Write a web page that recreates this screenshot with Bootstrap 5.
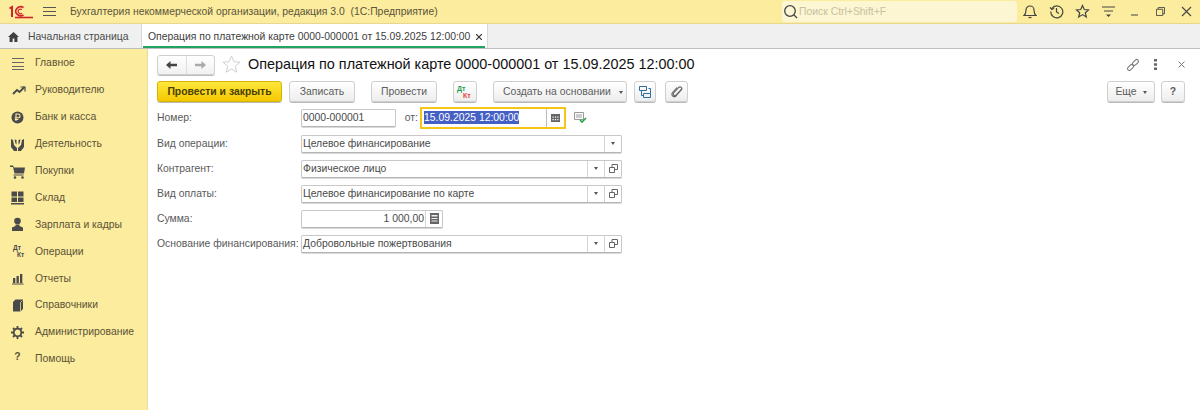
<!DOCTYPE html>
<html lang="ru"><head><meta charset="utf-8"><title>1С</title>
<link href="https://cdn.jsdelivr.net/npm/bootstrap@5.3.0/dist/css/bootstrap.min.css" rel="stylesheet">
<script src="https://cdn.jsdelivr.net/npm/bootstrap@5.3.0/dist/js/bootstrap.bundle.min.js"></script>
<style>
html,body{height:410px;overflow:hidden}
body{font-family:"Liberation Sans",Arial,sans-serif;font-size:10.4px;line-height:14px;color:#4b4b4b;background:#fff}
.topbar{height:24px;background:#fbec9e;border-bottom:1px solid #e6d98f;color:#5c5439}
.logo{width:24px;margin-left:9px;flex:none}
.burger{margin:0 14px 0 10px;flex:none}
.apptitle{white-space:pre}
.searchbox{width:235px;height:21px;margin-left:auto;background:#fdf6d3;border-radius:3px;color:#c7c0a0;padding-left:1px;gap:1px}
.topicons{width:183px;flex:none}
.topcell{flex:1;display:flex;justify-content:center;align-items:center}
.tabbar{height:25px;background:#f0f0f0;border-bottom:1px solid #bdbdbd}
.hometab{width:142px;height:24px;border-right:1px solid #d9d9d9;padding:1px 0 0 8px;gap:9px;color:#4b4b4b}
.doctab{width:346px;height:24px;background:#fff;border-right:1px solid #d9d9d9;padding:1px 0 0 6px;color:#3d3d3d;position:relative;white-space:nowrap}
.doctab::after{content:"";position:absolute;left:1px;right:2px;bottom:0;height:2px;background:#1fa463}
.tabx{margin-left:6px}
.mainarea{height:361px}
.sidemenu{width:148px;background:#fbec9e;border-right:1px solid #e8dc9a;padding-top:1px}
.sideitem{height:26.9px;padding-left:8px;color:#5b5236}
.sideico{width:19px;height:19px;margin-right:8px;flex:none}
.formpane{padding:6px 15px 0 9px;min-width:0}
.headrow{height:19px;margin-bottom:7px}
.navgroup{width:58px;height:20px;border:1px solid #d0d0d0;border-radius:3px;background:linear-gradient(#fff,#f1f1f1);box-shadow:0 1px 0 #bbb}
.navgroup span{flex:1;height:100%}
.navgroup span+span{border-left:1px solid #ddd}
.star{margin:0 7px}
.doctitle{font-size:14.4px;color:#111;line-height:19px}
.headicons{margin-left:auto}
.m1{margin-right:14px}.m2{margin-right:21px}
.toolrow{height:21px;margin-bottom:3px}
.tbtn{height:21px;padding:0;font-size:10.4px;line-height:19px;color:#5c5c5c;border:1px solid #cfcfcf;border-radius:3px;background:linear-gradient(#fff,#ededed);box-shadow:0 1px 0 #b9b9b9;display:flex;align-items:center;justify-content:center;flex:none}
.tbtn:hover{color:#5c5c5c}
.tmain{width:125px;margin-right:7px;font-weight:700;color:#4a3f00;border-color:#d4b400;background:linear-gradient(#ffe83c,#f4c800)}
.tmain:hover{color:#4a3f00}
.w66{width:66px}.m16{margin-right:16px}.w24{width:24px}.w22{width:22px;margin-right:9px}.w23{width:23px}
.w134{width:134px;margin-right:7px;justify-content:flex-start;padding-left:9px}
.w134 .caret{margin-left:8px}
.w48{width:48px;margin-right:6px}
.caret{display:inline-block;border:2px solid transparent;border-top:3px solid #555;border-bottom:0;margin-left:6px;margin-top:1px}
.formrow{height:25px;color:#5a5a5a}
.firstrow{margin-bottom:1px}
.flabel{width:144px;flex:none;white-space:nowrap}
.fbox{height:18px;border:1px solid #c8c8c8;border-bottom-color:#b5b5b5;border-radius:2px;background:#fff;color:#4a4a4a;padding-left:1px;display:flex;align-items:center;box-shadow:0 1px 0 #d9d9d9}
.w95{width:95px}.w321{width:321px}.w142{width:142px}
.grow1{flex:1;min-width:0}
.fcell{height:100%;display:flex;align-items:center;justify-content:center;border-left:1px solid #d5d5d5;flex:none}
.c17{width:17px}
.fromlbl{width:24px;text-align:right;padding-right:2px;flex:none}
.datebox{width:146px;height:22px;border:2px solid #f5c518;background:#fff;padding-left:2px;display:flex;align-items:center;flex:none}
.datesel{background:#4560c4;color:#fff;line-height:13px}
.datecell{width:18px;height:100%;display:flex;align-items:center;justify-content:center;border-left:1px solid #bbb;margin-left:auto}
.afterdate{margin-left:8px}
.moneyval{flex:1;text-align:right;padding-right:1px}
.dkt{font-size:7px;font-weight:700;line-height:7px;text-align:left;width:16px}
.dkt1{display:block;color:#1f9d55}
.dkt2{display:block;color:#e8443a;padding-left:6px}
</style></head>
<body class="d-flex flex-column">
<header class="topbar d-flex align-items-center">
 <svg class="logo" viewBox="0 0 24 14" height="14"><g fill="none" stroke="#d1232a"><path d="M.5 3.500L3 2v10" stroke-width="2"/><path d="M14.500 2.500a5 4.500 0 1 0 0 7.500" stroke-width="1.700"/><path d="M13 4.500a2.500 2.300 0 1 0 0 3.800" stroke-width="1.200"/><path d="M6 12.500h18" stroke-width="1.600"/></g></svg>
 <svg class="burger" width="13" height="12" viewBox="0 0 13 12" stroke="#555" stroke-width="1"><path d="M0 1.500h13M0 5.500h13M0 9.500h13"/></svg>
 <span class="apptitle">Бухгалтерия некоммерческой организации, редакция 3.0  (1С:Предприятие)</span>
 <div class="searchbox d-flex align-items-center">
  <svg width="15" height="15" viewBox="0 0 15 15" fill="none" stroke="#444" stroke-width="1.300"><circle cx="7" cy="7" r="5.300"/><path d="M11 11l3 3"/></svg><span>Поиск Ctrl+Shift+F</span>
 </div>
 <div class="topicons d-flex align-items-center">
  <span class="topcell"><svg width="14" height="15" viewBox="0 0 14 15" fill="none" stroke="#444" stroke-width="1.200"><path d="M1 11.500c2-1.500 2-3 2-5.500a4 4 0 0 1 8 0c0 2.500 0 4 2 5.500z"/><path d="M5.500 13.500h3"/></svg></span>
  <span class="topcell"><svg width="15" height="15" viewBox="0 0 15 15" fill="none" stroke="#444" stroke-width="1.200"><path d="M2.800 4.500a6 6 0 1 1-1 3"/><path d="M1 3.500l2 2 2-1.500"/><path d="M7.500 4v4l2.500 1.500"/></svg></span>
  <span class="topcell"><svg width="15" height="15" viewBox="0 0 15 15" fill="none" stroke="#444" stroke-width="1.200"><path d="M7.500 1.500l1.800 4 4.200.4-3.200 2.800 1 4.200-3.800-2.300-3.800 2.300 1-4.200L1.500 5.900l4.200-.4z"/></svg></span>
  <span class="topcell"><svg width="13" height="13" viewBox="0 0 13 13" fill="#444"><path d="M0 1.500h13v1H0zM2 5.500h9v1H2z"/><path d="M4 9.500h5L6.500 12z"/></svg></span>
  <span class="topcell"><svg width="9" height="9" viewBox="0 0 9 9" fill="#444"><path d="M1 7.500h7v1H1z"/></svg></span>
  <span class="topcell"><svg width="9" height="9" viewBox="0 0 10 10" fill="none" stroke="#444"><path d="M.5 2.500h7v7h-7z"/><path d="M2.500 2.500v-2h7v7h-2"/></svg></span>
  <span class="topcell"><svg width="11" height="11" viewBox="0 0 11 11" stroke="#444" stroke-width="1.100"><path d="M1 1l9 9M10 1l-9 9"/></svg></span>
 </div>
</header>
<nav class="tabbar d-flex">
 <div class="hometab d-flex align-items-center"><svg width="11" height="10" viewBox="0 0 11 10" fill="#3f3f3f"><path d="M5.500 0L0 5h1.600v5h3V6.500h1.800V10h3V5H11z"/></svg><span>Начальная страница</span></div>
 <div class="doctab d-flex align-items-center"><span>Операция по платежной карте 0000-000001 от 15.09.2025 12:00:00</span><svg class="tabx" width="6" height="6" viewBox="0 0 6 6" stroke="#333" stroke-width="1.200"><path d="M0 0l6 6M6 0L0 6"/></svg></div>
</nav>
<div class="mainarea d-flex">
 <aside class="sidemenu">
  <div class="sideitem d-flex align-items-center"><svg class="sideico" viewBox="0 0 19 19" stroke="#666" stroke-width="1" fill="none"><path d="M4 4.500h12M4 8.500h12M4 12.500h12M4 15.500h12"/></svg>Главное</div>
  <div class="sideitem d-flex align-items-center"><svg class="sideico" viewBox="0 0 19 19" fill="none" stroke="#4a4a4a" stroke-width="1.800"><path d="M5 13l4-4 2.500 2 5-5"/><path d="M12.500 6h4.500v4.500" stroke-width="1.200"/></svg>Руководителю</div>
  <div class="sideitem d-flex align-items-center"><svg class="sideico" viewBox="0 0 19 19"><circle cx="9.500" cy="9.500" r="6" fill="#4a4a4a"/><path d="M8 13V6h2.200a1.800 1.800 0 0 1 0 3.800H6.800M6.800 11.500h3.500" fill="none" stroke="#fbec9e" stroke-width="1.100"/></svg>Банк и касса</div>
  <div class="sideitem d-flex align-items-center"><svg class="sideico" viewBox="0 0 19 19" fill="#4a4a4a"><path d="M3 4l2 1 1 5 3 3v3H6l-3-4zM16 4l-2 1-1 5-3 3v3h3l3-4z"/><path d="M6.500 4.500l1 4 1 1V5zM12.500 4.500l-1 4-1 1V5z"/></svg>Деятельность</div>
  <div class="sideitem d-flex align-items-center"><svg class="sideico" viewBox="0 0 19 19" fill="#4a4a4a"><path d="M2 3.500h3l1 2h11l-1 6H6.500L5 5H2z"/><path d="M5.500 12.500h10v1h-10z"/><circle cx="7" cy="15.500" r="1.300"/><circle cx="14.500" cy="15.500" r="1.300"/></svg>Покупки</div>
  <div class="sideitem d-flex align-items-center"><svg class="sideico" viewBox="0 0 19 19" fill="#4a4a4a"><path d="M3.500 3.500h5.500v5H3.500zM10 3.500h5.500v5H10zM3.500 9.500h5.500v4.500H3.500zM10 9.500h5.500v4.500H10zM3 15h13v1.500H3z"/></svg>Склад</div>
  <div class="sideitem d-flex align-items-center"><svg class="sideico" viewBox="0 0 19 19" fill="#4a4a4a"><circle cx="9.500" cy="6" r="3.300"/><path d="M7.500 9.500h4V11l3.500 1.500V16H4v-3.500L7.500 11z"/></svg>Зарплата и кадры</div>
  <div class="sideitem d-flex align-items-center"><svg class="sideico" viewBox="0 0 19 19" fill="#4a4a4a" font-size="6.500" font-family="Liberation Sans" font-weight="700"><text x="5" y="7.500">Дт</text><text x="9" y="14.500">Кт</text></svg>Операции</div>
  <div class="sideitem d-flex align-items-center"><svg class="sideico" viewBox="0 0 19 19" fill="#4a4a4a"><path d="M5 9h2.300v5H5zM8.500 7h2.300v7H8.500zM12 5h2.300v9H12zM4 14.500h11.500v1H4z"/></svg>Отчеты</div>
  <div class="sideitem d-flex align-items-center"><svg class="sideico" viewBox="0 0 19 19" fill="#4a4a4a"><path d="M5 6l2.500-2.500h7.500V13l-2.500 2.500H5z"/><path d="M12.500 6.500l2-2" stroke="#fbec9e" stroke-width=".7"/><path d="M12.500 6.500V15.500" stroke="#fbec9e" stroke-width=".7"/></svg>Справочники</div>
  <div class="sideitem d-flex align-items-center"><svg class="sideico" viewBox="0 0 19 19"><circle cx="9.500" cy="9.500" r="3.800" fill="none" stroke="#4a4a4a" stroke-width="1.800"/><path d="M9.500 3v3M9.500 13v3M3 9.500h3M13 9.500h3M5 5l2 2M12 12l2 2M14 5l-2 2M7 12l-2 2" stroke="#4a4a4a" stroke-width="1.800"/></svg>Администрирование</div>
  <div class="sideitem d-flex align-items-center"><span class="sideico text-center fw-bold">?</span>Помощь</div>
 </aside>
 <main class="formpane flex-grow-1">
  <div class="headrow d-flex align-items-center">
   <div class="navgroup d-flex">
    <span class="d-flex align-items-center justify-content-center"><svg width="11" height="8" viewBox="0 0 11 8" fill="#444"><path d="M0 4l4.500-4v2.800H11v2.400H4.500V8z"/></svg></span>
    <span class="d-flex align-items-center justify-content-center"><svg width="11" height="8" viewBox="0 0 11 8" fill="#aaa"><path d="M11 4L6.500 0v2.800H0v2.400h6.500V8z"/></svg></span>
   </div>
   <svg class="star" width="19" height="19" viewBox="0 0 19 19" fill="none" stroke="#d0d0d0"><path d="M9.500 1l2.400 5.700 6.100.5-4.700 4 1.500 6-5.300-3.200-5.300 3.200 1.500-6-4.700-4 6.100-.5z"/></svg>
   <span class="doctitle">Операция по платежной карте 0000-000001 от 15.09.2025 12:00:00</span>
   <div class="headicons d-flex align-items-center">
    <svg class="m1" width="14" height="14" viewBox="0 0 14 14" fill="none" stroke="#777"><rect x="-3.500" y="-1.800" width="7" height="3.600" rx="1.800" transform="translate(9.500 4.500) rotate(-45)"/><rect x="-3.500" y="-1.800" width="7" height="3.600" rx="1.800" transform="translate(4.500 9.500) rotate(-45)"/></svg>
    <svg class="m2" width="3" height="11" viewBox="0 0 3 11" fill="#666"><path d="M0 0h3v2.500H0zM0 4.200h3v2.500H0zM0 8.500h3V11H0z"/></svg>
    <svg width="7" height="7" viewBox="0 0 7 7" stroke="#777"><path d="M.5.500l6 6M6.500.500l-6 6"/></svg>
   </div>
  </div>
  <div class="toolrow d-flex">
   <a class="btn tbtn tmain">Провести и закрыть</a>
   <a class="btn tbtn w66 m16">Записать</a>
   <a class="btn tbtn w66 m16">Провести</a>
   <a class="btn tbtn w24 m16"><span class="dkt"><span class="dkt1">Дт</span><span class="dkt2">Кт</span></span></a>
   <a class="btn tbtn w134">Создать на основании<i class="caret"></i></a>
   <a class="btn tbtn w22"><svg width="14" height="14" viewBox="0 0 14 14" fill="none" stroke="#2f6f9f"><path d="M1.500 1.500h7v4h-7zM5.500 8.500h7v4h-7zM10.500 3.500h2v5M3.500 5.500v5h2"/></svg></a>
   <a class="btn tbtn w23"><svg width="12" height="12" viewBox="0 0 12 12" fill="none" stroke="#666" stroke-width="1.100"><path d="M10.500 3L5 9a1.500 1.500 0 0 1-2.300-2l5-5.500a1 1 0 0 1 2.600 2.500l-5.500 6.200A2.500 2.500 0 0 1 1.200 7L6 1.500"/></svg></a>
   <a class="btn tbtn w48 ms-auto">Еще<i class="caret"></i></a>
   <a class="btn tbtn w24 fw-bold">?</a>
  </div>
  <div class="formrow firstrow d-flex align-items-center"><span class="flabel">Номер:</span><div class="fbox w95">0000-000001</div><span class="fromlbl">от:</span><div class="datebox"><span class="datesel">15.09.2025 12:00:00</span><span class="datecell"><svg width="9" height="9" viewBox="0 0 9 9"><path d="M0 1h9v8H0z" fill="#666"/><path d="M1.500 3.500h1.200v1.200H1.500zM3.900 3.500h1.200v1.200H3.900zM6.300 3.500h1.200v1.200H6.300zM1.500 6h1.200v1.200H1.500zM3.900 6h1.200v1.200H3.900zM6.300 6h1.200v1.200H6.300z" fill="#fff"/></svg></span></div><svg class="afterdate" width="13" height="12" viewBox="0 0 13 12" fill="none"><path d="M.5.500h9v7h-9zM2 3h6M2 5h6" stroke="#999"/><path d="M6 8l2 2 4-4" stroke="#2aa24a" stroke-width="1.600"/></svg></div>
  <div class="formrow d-flex align-items-center"><span class="flabel">Вид операции:</span><div class="fbox w321"><span class="grow1">Целевое финансирование</span><span class="fcell c17"><i class="caret m-0"></i></span></div></div>
  <div class="formrow d-flex align-items-center"><span class="flabel">Контрагент:</span><div class="fbox w321"><span class="grow1">Физическое лицо</span><span class="fcell c17"><i class="caret m-0"></i></span><span class="fcell c17"><svg width="9" height="9" viewBox="0 0 9 9" fill="none" stroke="#666"><path d="M.5 3.500h5v5h-5zM3 3.500V.5h5.500v5h-3"/></svg></span></div></div>
  <div class="formrow d-flex align-items-center"><span class="flabel">Вид оплаты:</span><div class="fbox w321"><span class="grow1">Целевое финансирование по карте</span><span class="fcell c17"><i class="caret m-0"></i></span><span class="fcell c17"><svg width="9" height="9" viewBox="0 0 9 9" fill="none" stroke="#666"><path d="M.5 3.500h5v5h-5zM3 3.500V.5h5.500v5h-3"/></svg></span></div></div>
  <div class="formrow d-flex align-items-center"><span class="flabel">Сумма:</span><div class="fbox w142"><span class="moneyval">1 000,00</span><span class="fcell c17"><svg width="9" height="11" viewBox="0 0 9 11" fill="#666"><path d="M0 0h9v11H0z"/><path d="M1.500 2h6v1.500h-6zM1.500 5h6v1h-6zM1.500 7.500h6v1h-6z" fill="#eee"/></svg></span></div></div>
  <div class="formrow d-flex align-items-center"><span class="flabel">Основание финансирования:</span><div class="fbox w321"><span class="grow1">Добровольные пожертвования</span><span class="fcell c17"><i class="caret m-0"></i></span><span class="fcell c17"><svg width="9" height="9" viewBox="0 0 9 9" fill="none" stroke="#666"><path d="M.5 3.500h5v5h-5zM3 3.500V.5h5.500v5h-3"/></svg></span></div></div>
 </main>
</div>
</body></html>
